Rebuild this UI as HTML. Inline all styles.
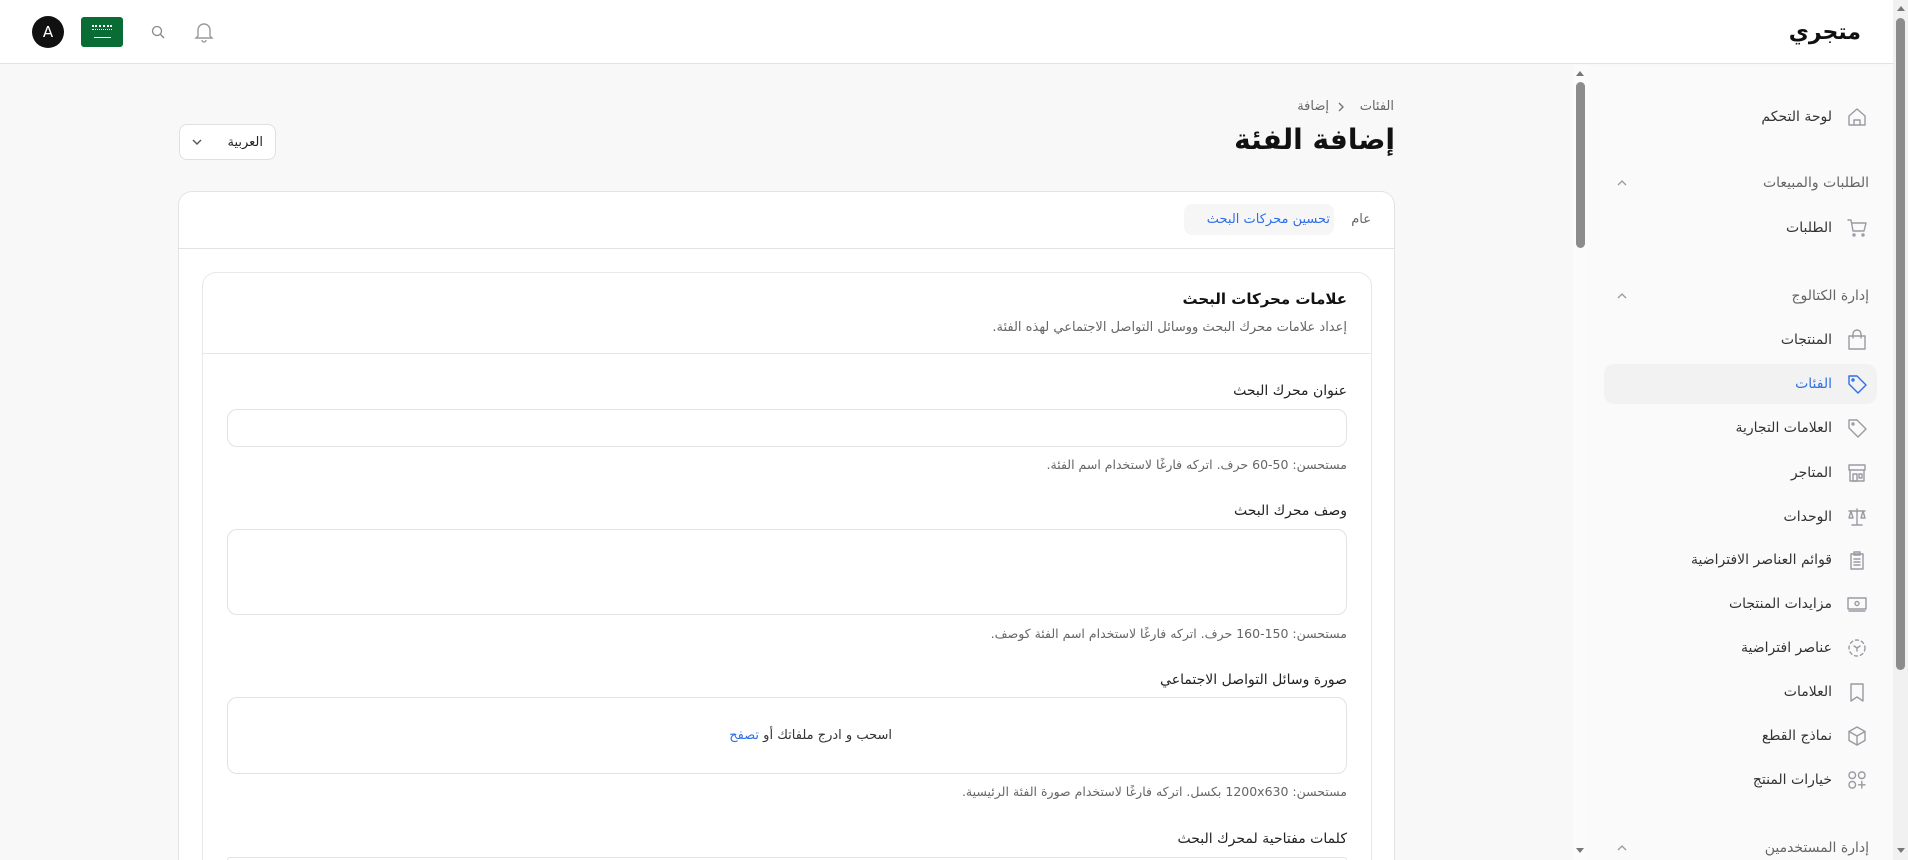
<!DOCTYPE html>
<html lang="ar" dir="rtl"><head><meta charset="utf-8">
<style>
*{box-sizing:border-box;margin:0;padding:0}
html,body{width:1908px;height:860px;overflow:hidden}
body{background:#f8f8f8;font-family:"DejaVu Sans","Liberation Sans",sans-serif;color:#222}
#wrap{position:absolute;left:0;top:0;width:1908px;height:860px;overflow:hidden}
.a{position:absolute}
.t{position:absolute;white-space:nowrap;line-height:1;direction:rtl}
#hdr{left:0;top:0;width:1893px;height:64px;background:#fff;border-bottom:1px solid #e3e3e3}
#side{left:1588px;top:65px;width:305px;height:795px;background:#fafafa}
.ic{position:absolute;width:22px;height:22px;left:1846px}
.ic svg{width:22px;height:22px;fill:none;stroke:#9a9aa2;stroke-width:1.4;stroke-linecap:round;stroke-linejoin:round}
.it{right:76px;font-size:14px;color:#333}
.sec{right:39px;font-size:14px;color:#666}
.chev{position:absolute;left:1616px;width:12px;height:8px}
.lbl{right:561px;font-size:14px;color:#222}
.hint{right:561px;font-size:12.5px;color:#666}
.box{position:absolute;left:227px;width:1120px;background:#fff;border:1px solid #e2e2e2;border-radius:10px}
</style></head><body><div id="wrap">
<div id="hdr" class="a"></div>
<div class="t" style="right:47px;top:22px;font-size:22px;font-weight:bold;color:#111">متجري</div>
<div class="a" style="left:32px;top:16px;width:32px;height:32px;border-radius:50%;background:#111;color:#fff;font-size:15px;text-align:center;line-height:32px;direction:ltr">A</div>
<div class="a" style="left:81px;top:17px;width:42px;height:30px;border-radius:3px;background:#0a6c35">
 <div class="a" style="left:11px;top:8px;width:20px;height:5px;border-top:2px dotted #fff;border-bottom:1px dotted #fff"></div>
 <div class="a" style="left:13px;top:20px;width:17px;height:1px;background:#fff"></div></div>
<svg class="a" style="left:150px;top:24px" width="16" height="16" viewBox="0 0 16 16" fill="none" stroke="#888" stroke-width="1.3"><circle cx="7" cy="7" r="4.5"/><path d="M10.5 10.5L14 14"/></svg>
<svg class="a" style="left:194px;top:20px" width="20" height="24" viewBox="0 0 20 24" fill="none" stroke="#999" stroke-width="1.4"><path d="M4 16V10a6 6 0 0112 0v6l2 2H2z"/><path d="M8 20a2 2 0 004 0"/></svg>

<div class="a" style="left:1573px;top:65px;width:15px;height:795px;background:#fbfbfb"></div>
<div class="a" style="left:1576px;top:82px;width:9px;height:166px;border-radius:5px;background:#8c8c8c"></div>
<div class="a" style="left:1576px;top:71px;width:0;height:0;border:4px solid transparent;border-bottom:5px solid #777;border-top:0"></div>
<div class="a" style="left:1576px;top:848px;width:0;height:0;border:4px solid transparent;border-top:5px solid #777;border-bottom:0"></div>

<div id="side" class="a"></div>
<div class="a" style="left:1893px;top:0;width:15px;height:860px;background:#f1f1f1"></div>
<div class="a" style="left:1896px;top:18px;width:9px;height:652px;border-radius:5px;background:#8c8c8c"></div>
<div class="a" style="left:1897px;top:6px;width:0;height:0;border:4px solid transparent;border-bottom:5px solid #777;border-top:0"></div>
<div class="a" style="left:1897px;top:848px;width:0;height:0;border:4px solid transparent;border-top:5px solid #777;border-bottom:0"></div>
<div class="a" style="left:1604px;top:364px;width:273px;height:40px;border-radius:10px;background:#f2f2f2"></div>

<div class="ic" style="top:106px"><svg viewBox="0 0 22 22"><path d="M3 10L11 3l8 7v9H3z"/><path d="M8 19v-5h6v5"/></svg></div>
<div class="t it" style="top:110px">لوحة التحكم</div>
<div class="t sec" style="top:176px">الطلبات والمبيعات</div>
<svg class="chev" style="top:179px" viewBox="0 0 12 8" fill="none" stroke="#999" stroke-width="1.3"><path d="M2 6l4-4 4 4"/></svg>
<div class="ic" style="top:217px"><svg viewBox="0 0 22 22"><path d="M2 3h3l2 11h11l2-8H6"/><circle cx="8" cy="18" r="1"/><circle cx="17" cy="18" r="1"/></svg></div>
<div class="t it" style="top:221px">الطلبات</div>
<div class="t sec" style="top:289px">إدارة الكتالوج</div>
<svg class="chev" style="top:292px" viewBox="0 0 12 8" fill="none" stroke="#999" stroke-width="1.3"><path d="M2 6l4-4 4 4"/></svg>
<div class="ic" style="top:329px"><svg viewBox="0 0 22 22"><path d="M3 7h16v13H3z"/><path d="M7 9V5a4 4 0 018 0v4"/></svg></div>
<div class="t it" style="top:333px">المنتجات</div>
<div class="ic" style="top:373px"><svg viewBox="0 0 22 22" style="stroke:#2f6fe8"><path d="M3 3h8l9 9-8 8-9-9z"/><circle cx="7" cy="7" r="1"/></svg></div>
<div class="t it" style="top:377px;color:#2f6fe8">الفئات</div>
<div class="ic" style="top:417px"><svg viewBox="0 0 22 22"><path d="M3 3h8l9 9-8 8-9-9z"/><circle cx="7" cy="7" r="1"/></svg></div>
<div class="t it" style="top:421px">العلامات التجارية</div>
<div class="ic" style="top:462px"><svg viewBox="0 0 22 22"><path d="M3 3h16v5H3z"/><path d="M4 8v11h14V8"/><path d="M7 12h4v7H7zM13 12h3v4h-3z"/></svg></div>
<div class="t it" style="top:466px">المتاجر</div>
<div class="ic" style="top:506px"><svg viewBox="0 0 22 22"><path d="M11 3v16M6 19h10M3 5h16M5 5l-2 7h4zM17 5l-2 7h4z"/></svg></div>
<div class="t it" style="top:510px">الوحدات</div>
<div class="ic" style="top:549px"><svg viewBox="0 0 22 22"><path d="M5 5h12v15H5z"/><path d="M8 3h6v3H8zM8 10h6M8 13h6M8 16h6"/></svg></div>
<div class="t it" style="top:553px">قوائم العناصر الافتراضية</div>
<div class="ic" style="top:593px"><svg viewBox="0 0 22 22"><path d="M2 5h18v11H2z"/><circle cx="11" cy="10.5" r="2"/><path d="M3 18h16"/></svg></div>
<div class="t it" style="top:597px">مزايدات المنتجات</div>
<div class="ic" style="top:637px"><svg viewBox="0 0 22 22" stroke-dasharray="3 3"><circle cx="11" cy="11" r="8"/><path d="M8 9l3 2 3-2M11 11v3" stroke-dasharray="none"/></svg></div>
<div class="t it" style="top:641px">عناصر افتراضية</div>
<div class="ic" style="top:681px"><svg viewBox="0 0 22 22"><path d="M5 3h12v17l-6-4-6 4z"/></svg></div>
<div class="t it" style="top:685px">العلامات</div>
<div class="ic" style="top:725px"><svg viewBox="0 0 22 22"><path d="M11 2l8 4.5v9L11 20l-8-4.5v-9z"/><path d="M3 6.5l8 4.5 8-4.5M11 11v9"/></svg></div>
<div class="t it" style="top:729px">نماذج القطع</div>
<div class="ic" style="top:769px"><svg viewBox="0 0 22 22"><rect x="3" y="3" width="6.5" height="6.5" rx="3"/><rect x="12.5" y="3" width="6.5" height="6.5" rx="3"/><rect x="3" y="12.5" width="6.5" height="6.5" rx="3"/><path d="M15.8 12.5v6.5M12.5 15.8h6.5"/></svg></div>
<div class="t it" style="top:773px">خيارات المنتج</div>
<div class="t sec" style="top:841px">إدارة المستخدمين</div>
<svg class="chev" style="top:844px" viewBox="0 0 12 8" fill="none" stroke="#999" stroke-width="1.3"><path d="M2 6l4-4 4 4"/></svg>

<div class="t" style="right:514px;top:100px;font-size:13px;color:#666">الفئات</div>
<svg class="a" style="left:1337px;top:101px" width="8" height="12" viewBox="0 0 8 12" fill="none" stroke="#777" stroke-width="1.4"><path d="M2 2l4 4-4 4"/></svg>
<div class="t" style="right:579px;top:100px;font-size:13px;color:#666">إضافة</div>
<div class="t" style="right:513px;top:126px;font-size:28px;font-weight:bold;color:#111">إضافة الفئة</div>
<div class="a" style="left:179px;top:124px;width:97px;height:36px;border:1px solid #e0e0e0;border-radius:8px;background:#fff"></div>
<div class="t" style="right:1645px;top:136px;font-size:13px;color:#222">العربية</div>
<svg class="a" style="left:192px;top:138px" width="10" height="8" viewBox="0 0 10 8" fill="none" stroke="#555" stroke-width="1.4"><path d="M1 2l4 4 4-4"/></svg>

<div class="a" style="left:178px;top:191px;width:1217px;height:669px;background:#fff;border:1px solid #e3e3e3;border-bottom:0;border-radius:14px 14px 0 0"></div>
<div class="a" style="left:179px;top:248px;width:1215px;height:1px;background:#e3e3e3"></div>
<div class="a" style="left:1184px;top:204px;width:150px;height:31px;border-radius:8px;background:#f6f6f6"></div>
<div class="t" style="right:578px;top:213px;font-size:13px;color:#2f6fe8">تحسين محركات البحث</div>
<div class="t" style="right:537px;top:213px;font-size:13px;color:#666">عام</div>

<div class="a" style="left:202px;top:272px;width:1170px;height:588px;background:#fff;border:1px solid #e8e8e8;border-bottom:0;border-radius:14px 14px 0 0"></div>
<div class="a" style="left:203px;top:353px;width:1168px;height:1px;background:#e6e6e6"></div>
<div class="t" style="right:561px;top:292px;font-size:15px;font-weight:bold;color:#111">علامات محركات البحث</div>
<div class="t hint" style="top:321px;font-size:13px">إعداد علامات محرك البحث ووسائل التواصل الاجتماعي لهذه الفئة.</div>

<div class="t lbl" style="top:384px">عنوان محرك البحث</div>
<div class="box" style="top:409px;height:38px"></div>
<div class="t hint" style="top:459px">مستحسن: 50-60 حرف. اتركه فارغًا لاستخدام اسم الفئة.</div>

<div class="t lbl" style="top:504px">وصف محرك البحث</div>
<div class="box" style="top:529px;height:86px"></div>
<div class="t hint" style="top:628px">مستحسن: 150-160 حرف. اتركه فارغًا لاستخدام اسم الفئة كوصف.</div>

<div class="t lbl" style="top:673px">صورة وسائل التواصل الاجتماعي</div>
<div class="box" style="top:697px;height:77px"></div>
<div class="t" style="right:1016px;top:729px;font-size:13px;color:#333">اسحب و ادرج ملفاتك أو <span style="color:#2f6fe8">تصفح</span></div>
<div class="t hint" style="top:786px">مستحسن: 1200x630 بكسل. اتركه فارغًا لاستخدام صورة الفئة الرئيسية.</div>

<div class="t lbl" style="top:832px">كلمات مفتاحية لمحرك البحث</div>
<div class="box" style="top:857px;height:3px;border-bottom:0;border-radius:10px 10px 0 0"></div>
</div></body></html>
